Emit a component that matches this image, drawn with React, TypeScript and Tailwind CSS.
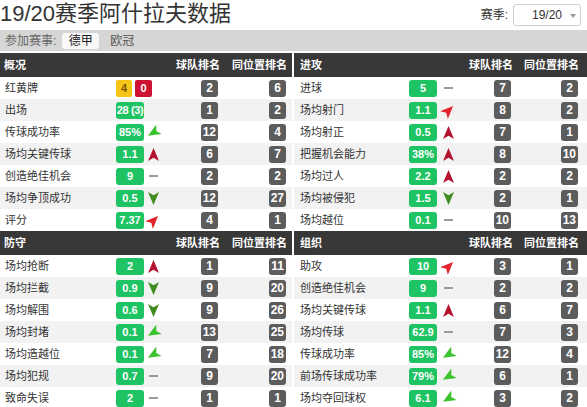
type Trend = "up" | "ne" | "dash" | "sw" | "down" | "none";

type Stat = {
  label: string;
  value: string;
  trend: Trend;
  team: number;
  pos: number;
  cards?: [number, number];
};

const overview: Stat[] = [
  { label: "红黄牌", value: "", trend: "none", team: 2, pos: 6, cards: [4, 0] },
  { label: "出场", value: "28 (3)", trend: "none", team: 1, pos: 2 },
  { label: "传球成功率", value: "85%", trend: "sw", team: 12, pos: 4 },
  { label: "场均关键传球", value: "1.1", trend: "up", team: 6, pos: 7 },
  { label: "创造绝佳机会", value: "9", trend: "dash", team: 2, pos: 2 },
  { label: "场均争顶成功", value: "0.5", trend: "down", team: 12, pos: 27 },
  { label: "评分", value: "7.37", trend: "ne", team: 4, pos: 1 },
];

const attack: Stat[] = [
  { label: "进球", value: "5", trend: "dash", team: 7, pos: 2 },
  { label: "场均射门", value: "1.1", trend: "ne", team: 8, pos: 2 },
  { label: "场均射正", value: "0.5", trend: "up", team: 7, pos: 1 },
  { label: "把握机会能力", value: "38%", trend: "up", team: 8, pos: 10 },
  { label: "场均过人", value: "2.2", trend: "up", team: 2, pos: 2 },
  { label: "场均被侵犯", value: "1.5", trend: "down", team: 2, pos: 1 },
  { label: "场均越位", value: "0.1", trend: "dash", team: 10, pos: 13 },
];

const defence: Stat[] = [
  { label: "场均抢断", value: "2", trend: "up", team: 1, pos: 11 },
  { label: "场均拦截", value: "0.9", trend: "down", team: 9, pos: 20 },
  { label: "场均解围", value: "0.6", trend: "down", team: 9, pos: 26 },
  { label: "场均封堵", value: "0.1", trend: "sw", team: 13, pos: 25 },
  { label: "场均造越位", value: "0.1", trend: "sw", team: 7, pos: 18 },
  { label: "场均犯规", value: "0.7", trend: "dash", team: 9, pos: 20 },
  { label: "致命失误", value: "2", trend: "dash", team: 1, pos: 1 },
];

const organise: Stat[] = [
  { label: "助攻", value: "10", trend: "ne", team: 3, pos: 1 },
  { label: "创造绝佳机会", value: "9", trend: "dash", team: 2, pos: 2 },
  { label: "场均关键传球", value: "1.1", trend: "up", team: 6, pos: 7 },
  { label: "场均传球", value: "62.9", trend: "dash", team: 7, pos: 3 },
  { label: "传球成功率", value: "85%", trend: "sw", team: 12, pos: 4 },
  { label: "前场传球成功率", value: "79%", trend: "sw", team: 6, pos: 1 },
  { label: "场均夺回球权", value: "6.1", trend: "sw", team: 3, pos: 2 },
];

// class sets for the two columns of panels (they are not quite the same width)
const sides = {
  left: {
    head: "pl-[4px] pr-[5px]",
    posHead: "w-[67px]",
    row: "pl-[5px] pr-[6px]",
    label: "w-[111px]",
    arrow: "ml-[3px]",
    posCell: "w-[68px]",
  },
  right: {
    head: "pl-[6px] pr-[8px]",
    posHead: "w-[66px]",
    row: "pl-[6px] pr-[9px]",
    label: "w-[109px]",
    arrow: "ml-[5px]",
    posCell: "w-[67px]",
  },
};

type Side = keyof typeof sides;

function Arrow({ trend }: { trend: Trend }) {
  if (trend === "none") return null;
  if (trend === "dash") return <div className="h-[2px] w-[9px] bg-[#9a9a9a]" />;
  const look = {
    up: { fill: "#b5122f", rot: 0 },
    ne: { fill: "#e5232d", rot: 45 },
    sw: { fill: "#3cc22e", rot: 240 },
    down: { fill: "#3f8c20", rot: 180 },
  }[trend];
  return (
    <svg width="11" height="13" viewBox="0 0 12 14" style={{ transform: `rotate(${look.rot}deg)` }}>
      <path d="M6 0 L12 14 L6 10.5 L0 14 Z" fill={look.fill} />
    </svg>
  );
}

function Badge({ n }: { n: number }) {
  return (
    <div className="flex h-[17px] min-w-[17px] items-center justify-center rounded-[3px] bg-[#5c5c5c] px-[2px] text-[12px] font-bold text-white">
      {n}
    </div>
  );
}

function Row({ s, side, shaded }: { s: Stat; side: Side; shaded: boolean }) {
  const c = sides[side];
  return (
    <div className={`flex h-[22px] items-center ${shaded ? "bg-[#f2f2f2]" : "bg-white"} ${c.row}`}>
      <div className={`${c.label} whitespace-nowrap text-[11px] text-[#333]`}>{s.label}</div>
      {s.cards ? (
        <div className="flex items-center">
          <div className="flex h-[17px] w-[16px] items-center justify-center rounded-[2px] bg-[#f5c518] text-[11px] font-bold text-[#7a5200]">
            {s.cards[0]}
          </div>
          <div className="ml-[3px] flex h-[17px] w-[17px] items-center justify-center rounded-[2px] bg-[#cc1230] text-[11px] font-bold text-white">
            {s.cards[1]}
          </div>
        </div>
      ) : (
        <>
          <div
            className={`flex h-[17px] w-[28px] items-center justify-center whitespace-nowrap rounded-[3px] bg-[#1ec363] text-[11px] font-bold text-white ${
              s.value.length > 4 ? "tracking-[-0.4px]" : ""
            }`}
          >
            {s.value}
          </div>
          <div className={`${c.arrow} flex w-[13px] items-center justify-center`}>
            <Arrow trend={s.trend} />
          </div>
        </>
      )}
      <div className="flex flex-1 justify-end">
        <Badge n={s.team} />
      </div>
      <div className={`${c.posCell} flex justify-end`}>
        <Badge n={s.pos} />
      </div>
    </div>
  );
}

function Panel({ title, rows, side }: { title: string; rows: Stat[]; side: Side }) {
  const c = sides[side];
  return (
    <div>
      <div className={`flex h-[24px] items-center bg-[#383838] text-[11px] font-bold text-white ${c.head}`}>
        <div className="flex-1">{title}</div>
        <div>球队排名</div>
        <div className={`${c.posHead} text-right`}>同位置排名</div>
      </div>
      {rows.map((s, i) => (
        <Row key={s.label} s={s} side={side} shaded={i % 2 === 1} />
      ))}
    </div>
  );
}

export default function App() {
  return (
    <div className="h-[407px] w-[587px] overflow-hidden bg-white font-['Liberation_Sans','Noto_Sans_CJK_SC',sans-serif] text-[#333]">
      <div className="flex h-[30px] items-center justify-between">
        <h1 className="pb-[2px] text-[22px] leading-none text-[#333]">19/20赛季阿什拉夫数据</h1>
        <div className="flex items-center pr-[6px]">
          <span className="mr-[5px] text-[12px] text-[#333]">赛季:</span>
          <div className="relative flex h-[22px] w-[68px] items-center justify-center rounded-[3px] border border-[#cfcfcf] bg-white text-[12px] text-[#333]">
            19/20
            <span className="absolute right-[4px] top-[9px] h-0 w-0 border-x-[3px] border-t-[4px] border-x-transparent border-t-[#999]" />
          </div>
        </div>
      </div>
      <div className="flex h-[21px] items-center bg-[#d6d6d6] pl-[5px] text-[12px]">
        <span className="text-[#666]">参加赛事:</span>
        <span className="ml-[6px] flex h-[16px] w-[37px] items-center justify-center rounded-[3px] bg-[#f8f8f8] text-[#222]">德甲</span>
        <span className="ml-[11px] text-[#555]">欧冠</span>
      </div>
      <div className="mt-[2px] grid grid-cols-[292px_293px] gap-x-[2px]">
        <Panel title="概况" rows={overview} side="left" />
        <Panel title="进攻" rows={attack} side="right" />
        <Panel title="防守" rows={defence} side="left" />
        <Panel title="组织" rows={organise} side="right" />
      </div>
    </div>
  );
}
